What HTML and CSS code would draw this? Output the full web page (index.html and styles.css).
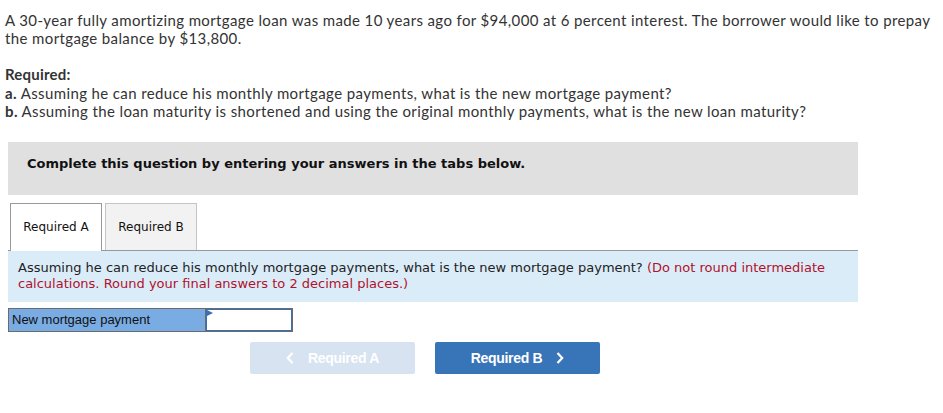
FILE: index.html
```html
<!DOCTYPE html>
<html>
<head>
<meta charset="utf-8">
<link rel="stylesheet" href="styles.css">
</head>
<body>
<div class="page">
  <p class="intro">A 30-year fully amortizing mortgage loan was made 10 years ago for $94,000 at 6 percent interest. The borrower would like to prepay the mortgage balance by $13,800.</p>
  <div class="required">
    <div class="req-title">Required:</div>
    <div><b>a.</b> Assuming he can reduce his monthly mortgage payments, what is the new mortgage payment?</div>
    <div><b>b.</b> Assuming the loan maturity is shortened and using the original monthly payments, what is the new loan maturity?</div>
  </div>
  <div class="panel">
    <div class="banner">Complete this question by entering your answers in the tabs below.</div>
    <div class="tabs">
      <div class="tab active">Required A</div>
      <div class="tab">Required B</div>
    </div>
    <div class="prompt">Assuming he can reduce his monthly mortgage payments, what is the new mortgage payment? <span class="note">(Do not round intermediate calculations. Round your final answers to 2 decimal places.)</span></div>
    <div class="answer-row">
      <div class="answer-label">New mortgage payment</div>
      <div class="answer-input"><span class="flag"></span></div>
    </div>
    <div class="nav">
      <button class="btn prev"><svg class="chev" width="8" height="12" viewBox="0 0 8 12"><path d="M6.5 1 L1.8 6 L6.5 11" fill="none" stroke="#fff" stroke-width="2.2"/></svg><span>Required A</span></button>
      <button class="btn next"><span>Required B</span><svg class="chev" width="8" height="12" viewBox="0 0 8 12"><path d="M1.5 1 L6.2 6 L1.5 11" fill="none" stroke="#fff" stroke-width="2.2"/></svg></button>
    </div>
  </div>
</div>
</body>
</html>
```
FILE: styles.css
```css
* { box-sizing: border-box; }
html, body { margin: 0; padding: 0; background: #fff; }
.page {
  padding: 5px 0 0 5px;
  font-family: "Lato", "Open Sans", sans-serif;
  color: #333;
}
.intro {
  margin: 6px 0 0 0;
  font-size: 15px;
  line-height: 18px;
  letter-spacing: 0.38px;
  width: 940px;
}
.required {
  margin-top: 18px;
  font-size: 15px;
  line-height: 18.5px;
  letter-spacing: 0.38px;
}
.req-title { font-weight: 700; letter-spacing: 0.2px; }
.required b { font-weight: 700; }
.panel {
  margin: 21px 0 0 3px;
  width: 850px;
  font-family: "DejaVu Sans", Verdana, sans-serif;
}
.banner {
  background: #e0e0e0;
  height: 53px;
  padding: 14px 0 0 19px;
  font-size: 13px;
  font-weight: 700;
  color: #111;
  line-height: 16px;
}
.tabs {
  display: flex;
  gap: 3px;
  margin-top: 8px;
  padding-left: 2px;
  border-bottom: 1px solid #999;
  height: 48px;
}
.tab {
  width: 92px;
  height: 47px;
  border: 1px solid #c4c4c4;
  border-bottom: none;
  background: #f2f2f2;
  font-size: 12px;
  color: #111;
  display: flex;
  align-items: center;
  justify-content: center;
}
.tab.active {
  background: #fff;
  border-color: #999;
  height: 48px;
  margin-bottom: -1px;
}
.prompt {
  background: #dbecf9;
  height: 51px;
  padding: 9px 10px 0 10px;
  font-size: 13px;
  line-height: 16px;
  color: #222;
}
.note { color: #b0122b; }
.answer-row {
  display: flex;
  margin-top: 6px;
  height: 24px;
}
.answer-label {
  width: 197px;
  background: #7aace4;
  border: 1px solid #6b6b6b;
  border-right: none;
  font-family: "Liberation Sans", Arial, sans-serif;
  font-size: 13px;
  color: #111;
  padding: 3px 0 0 3px;
}
.answer-input {
  position: relative;
  width: 88px;
  background: #fff;
  border: 1px solid #6b6b6b;
  box-shadow: inset 0 0 0 1px #3a6fb5;
}
.flag {
  position: absolute;
  left: 1px;
  top: 1px;
  width: 0;
  height: 0;
  border-top: 3px solid transparent;
  border-bottom: 3px solid transparent;
  border-left: 6px solid #3a6fb5;
}
.nav {
  display: flex;
  gap: 20px;
  margin: 10px 0 0 242px;
}
.btn {
  width: 165px;
  height: 32px;
  border: none;
  border-radius: 2px;
  font-family: "Liberation Sans", Arial, sans-serif;
  font-weight: 700;
  font-size: 14px;
  color: #fff;
  letter-spacing: -0.3px;
  padding: 0;
  display: flex;
  align-items: center;
  justify-content: center;
  gap: 14px;
}
.btn.prev { background: #d7e3f1; }
.btn.next { background: #3874b8; }
.chev { display: block; }
```
